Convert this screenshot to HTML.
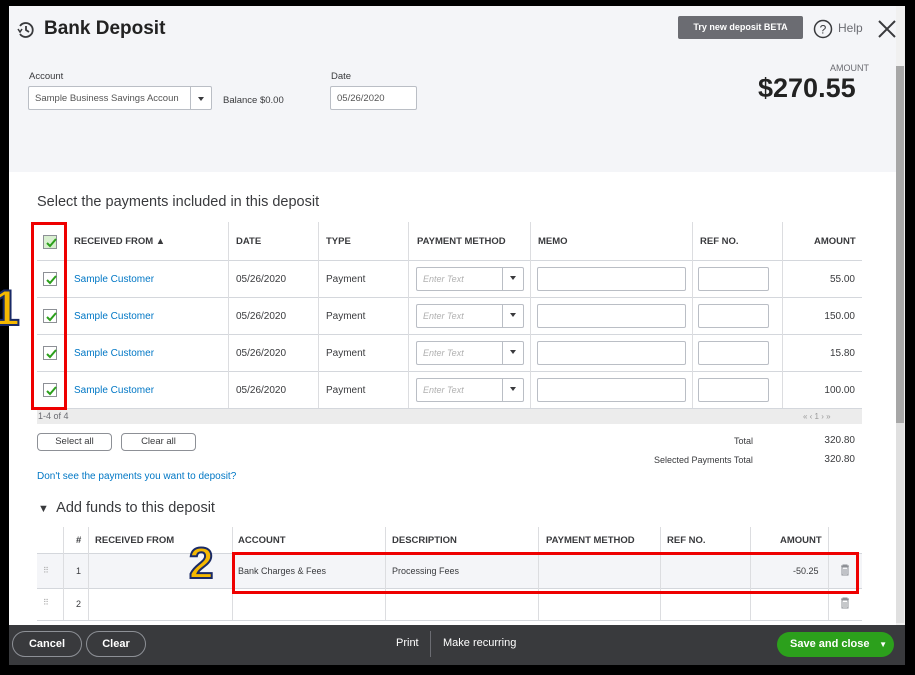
<!DOCTYPE html>
<html><head><meta charset="utf-8"><style>
*{box-sizing:border-box;margin:0;padding:0}
body{width:915px;height:675px;background:#000;position:relative;overflow:hidden;font-family:"Liberation Sans",sans-serif;color:#393a3d}
.a{position:absolute}
.hdr{left:9px;top:6px;width:887px;height:166px;background:#f4f5f8}
.main{left:9px;top:172px;width:887px;height:453px;background:#fff}
.foot{left:9px;top:625px;width:896px;height:40px;background:#393a3d}
.t{font-size:10px}
.th{font-size:9.5px;font-weight:bold;color:#393a3d}
.lnk{color:#0077c5;font-size:10px}
.vl{width:1px;background:#dcdde0}
.hl{height:1px;background:#d4d7dc}
.in{border:1px solid #babec5;background:#fff;border-radius:2px}
.cb{width:14px;height:14px;border:1px solid #8d9096;background:#fff}
.cb svg{position:absolute;left:1px;top:1px}
.btn{border:1px solid #8d9096;border-radius:4px;font-size:9.5px;text-align:center;line-height:16px;background:#fff}
.fb{border:1px solid #8d9096;border-radius:14px;color:#fff;font-size:11px;font-weight:bold;text-align:center;line-height:24px}
.red{border:3px solid #ee0000}
.num{font-weight:bold;color:#f5b800;-webkit-text-stroke:2px #1a2a66;font-family:"Liberation Sans",sans-serif;line-height:1}
.dd{position:absolute;left:93px;top:8px;width:0;height:0;border-left:3px solid transparent;border-right:3px solid transparent;border-top:4px solid #393a3d}
</style></head><body>
<div class="a hdr"></div>
<div class="a main"></div>
<div class="a foot"></div>
<div class="a" style="left:896px;top:6px;width:9px;height:619px;background:#f0f0f0"></div>
<div class="a" style="left:896px;top:66px;width:8px;height:357px;background:#a7a7a7"></div>
<div class="a" style="left:896px;top:423px;width:8px;height:200px;background:#e0e0e0"></div>

<svg class="a" style="left:16px;top:20px" width="20" height="20" viewBox="0 0 20 20"><path d="M4 6A7 7 0 1 1 4 14" fill="none" stroke="#393a3d" stroke-width="1.8"/><path d="M10 6v4l3 2" fill="none" stroke="#393a3d" stroke-width="1.8"/><path d="M2 9l2 3 2-3" fill="none" stroke="#393a3d" stroke-width="1.5"/></svg>
<div class="a" style="left:44px;top:18px;font-size:19px;font-weight:bold;color:#222">Bank Deposit</div>
<div class="a" style="left:678px;top:16px;width:125px;height:23px;background:#6b6c72;border-radius:2px;color:#fff;font-size:9px;font-weight:bold;text-align:center;line-height:23px">Try new deposit BETA</div>
<svg class="a" style="left:813px;top:19px" width="20" height="20"><circle cx="10" cy="10" r="8.5" fill="none" stroke="#393a3d" stroke-width="1.5"/><text x="10" y="14.5" text-anchor="middle" font-size="12" font-family="Liberation Sans" fill="#393a3d">?</text></svg>
<div class="a" style="left:838px;top:21px;font-size:12px;color:#6b6c72">Help</div>
<svg class="a" style="left:877px;top:19px" width="20" height="20"><path d="M2 2L18 18M18 2L2 18" stroke="#393a3d" stroke-width="2"/></svg>
<div class="a t" style="left:29px;top:71px;font-size:9.5px">Account</div>
<div class="a in" style="left:28px;top:86px;width:184px;height:24px"></div>
<div class="a t" style="left:35px;top:93px;font-size:9.5px;color:#555">Sample Business Savings Accoun</div>
<div class="a vl" style="left:190px;top:87px;height:22px;background:#babec5"></div>
<div class="a" style="left:198px;top:97px;border-left:3px solid transparent;border-right:3px solid transparent;border-top:4px solid #393a3d"></div>
<div class="a t" style="left:223px;top:95px;font-size:9.5px">Balance $0.00</div>
<div class="a t" style="left:331px;top:71px;font-size:9.5px">Date</div>
<div class="a in" style="left:330px;top:86px;width:87px;height:24px"></div>
<div class="a t" style="left:337px;top:93px;font-size:9.5px;color:#555">05/26/2020</div>
<div class="a" style="left:830px;top:63px;font-size:9px;color:#6b6c72">AMOUNT</div>
<div class="a" style="left:758px;top:73px;font-size:27px;font-weight:bold;color:#222">$270.55</div>

<div class="a" style="left:37px;top:194px;font-size:14.5px">Select the payments included in this deposit</div>
<div class="a hl" style="left:37px;top:260px;width:825px"></div>
<div class="a hl" style="left:37px;top:297px;width:825px"></div>
<div class="a hl" style="left:37px;top:334px;width:825px"></div>
<div class="a hl" style="left:37px;top:371px;width:825px"></div>
<div class="a hl" style="left:37px;top:408px;width:825px"></div>
<div class="a" style="left:37px;top:409px;width:825px;height:15px;background:#ececec"></div>
<div class="a" style="left:38px;top:411px;font-size:9px;color:#6b6c72">1-4 of 4</div>
<div class="a" style="left:803px;top:412px;font-size:8px;color:#999">« ‹ 1 › »</div>
<div class="a vl" style="left:65px;top:222px;height:186px"></div>
<div class="a vl" style="left:228px;top:222px;height:186px"></div>
<div class="a vl" style="left:318px;top:222px;height:186px"></div>
<div class="a vl" style="left:408px;top:222px;height:186px"></div>
<div class="a vl" style="left:530px;top:222px;height:186px"></div>
<div class="a vl" style="left:692px;top:222px;height:186px"></div>
<div class="a vl" style="left:782px;top:222px;height:186px"></div>
<div class="a th" style="left:74px;top:236px">RECEIVED FROM ▲</div>
<div class="a th" style="left:236px;top:236px">DATE</div>
<div class="a th" style="left:326px;top:236px">TYPE</div>
<div class="a th" style="left:417px;top:236px">PAYMENT METHOD</div>
<div class="a th" style="left:538px;top:236px">MEMO</div>
<div class="a th" style="left:700px;top:236px">REF NO.</div>
<div class="a th" style="left:814px;top:236px">AMOUNT</div>
<div class="a cb" style="left:43px;top:235px;background:#d8efd0"><svg width="12" height="12"><path d="M2 6l3 3 6-7" fill="none" stroke="#2ca01c" stroke-width="2"/></svg></div>

<div class="a cb" style="left:43px;top:272px"><svg width="12" height="12"><path d="M2 6l3 3 6-7" fill="none" stroke="#2ca01c" stroke-width="2"/></svg></div>
<div class="a cb" style="left:43px;top:309px"><svg width="12" height="12"><path d="M2 6l3 3 6-7" fill="none" stroke="#2ca01c" stroke-width="2"/></svg></div>
<div class="a cb" style="left:43px;top:346px"><svg width="12" height="12"><path d="M2 6l3 3 6-7" fill="none" stroke="#2ca01c" stroke-width="2"/></svg></div>
<div class="a cb" style="left:43px;top:383px"><svg width="12" height="12"><path d="M2 6l3 3 6-7" fill="none" stroke="#2ca01c" stroke-width="2"/></svg></div>

<div class="a lnk" style="left:74px;top:274px">Sample Customer</div>
<div class="a lnk" style="left:74px;top:311px">Sample Customer</div>
<div class="a lnk" style="left:74px;top:348px">Sample Customer</div>
<div class="a lnk" style="left:74px;top:385px">Sample Customer</div>
<div class="a t" style="left:236px;top:274px">05/26/2020</div>
<div class="a t" style="left:236px;top:311px">05/26/2020</div>
<div class="a t" style="left:236px;top:348px">05/26/2020</div>
<div class="a t" style="left:236px;top:385px">05/26/2020</div>
<div class="a t" style="left:326px;top:274px">Payment</div>
<div class="a t" style="left:326px;top:311px">Payment</div>
<div class="a t" style="left:326px;top:348px">Payment</div>
<div class="a t" style="left:326px;top:385px">Payment</div>

<div class="a in" style="left:416px;top:267px;width:108px;height:24px"><span style="position:absolute;left:6px;top:6px;font-size:9px;font-style:italic;color:#b0b0b0">Enter Text</span><span style="position:absolute;left:85px;top:0;width:1px;height:22px;background:#babec5"></span><span class="dd"></span></div>
<div class="a in" style="left:416px;top:304px;width:108px;height:24px"><span style="position:absolute;left:6px;top:6px;font-size:9px;font-style:italic;color:#b0b0b0">Enter Text</span><span style="position:absolute;left:85px;top:0;width:1px;height:22px;background:#babec5"></span><span class="dd"></span></div>
<div class="a in" style="left:416px;top:341px;width:108px;height:24px"><span style="position:absolute;left:6px;top:6px;font-size:9px;font-style:italic;color:#b0b0b0">Enter Text</span><span style="position:absolute;left:85px;top:0;width:1px;height:22px;background:#babec5"></span><span class="dd"></span></div>
<div class="a in" style="left:416px;top:378px;width:108px;height:24px"><span style="position:absolute;left:6px;top:6px;font-size:9px;font-style:italic;color:#b0b0b0">Enter Text</span><span style="position:absolute;left:85px;top:0;width:1px;height:22px;background:#babec5"></span><span class="dd"></span></div>

<div class="a in" style="left:537px;top:267px;width:149px;height:24px"></div>
<div class="a in" style="left:537px;top:304px;width:149px;height:24px"></div>
<div class="a in" style="left:537px;top:341px;width:149px;height:24px"></div>
<div class="a in" style="left:537px;top:378px;width:149px;height:24px"></div>
<div class="a in" style="left:698px;top:267px;width:71px;height:24px"></div>
<div class="a in" style="left:698px;top:304px;width:71px;height:24px"></div>
<div class="a in" style="left:698px;top:341px;width:71px;height:24px"></div>
<div class="a in" style="left:698px;top:378px;width:71px;height:24px"></div>
<div class="a t" style="right:60px;top:274px">55.00</div>
<div class="a t" style="right:60px;top:311px">150.00</div>
<div class="a t" style="right:60px;top:348px">15.80</div>
<div class="a t" style="right:60px;top:385px">100.00</div>

<div class="a btn" style="left:37px;top:433px;width:75px;height:18px">Select all</div>
<div class="a btn" style="left:121px;top:433px;width:75px;height:18px">Clear all</div>
<div class="a" style="left:734px;top:436px;font-size:9px">Total</div>
<div class="a t" style="right:60px;top:435px">320.80</div>
<div class="a" style="left:654px;top:455px;font-size:9px">Selected Payments Total</div>
<div class="a t" style="right:60px;top:454px">320.80</div>
<div class="a lnk" style="left:37px;top:471px">Don't see the payments you want to deposit?</div>

<div class="a" style="left:38px;top:500px;font-size:14.5px"><span style="font-size:11px">▼</span>&nbsp; Add funds to this deposit</div>
<div class="a" style="left:37px;top:553px;width:825px;height:35px;background:#f4f5f8"></div>
<div class="a hl" style="left:37px;top:553px;width:825px"></div>
<div class="a hl" style="left:37px;top:588px;width:825px"></div>
<div class="a hl" style="left:37px;top:620px;width:825px"></div>
<div class="a vl" style="left:63px;top:527px;height:93px"></div>
<div class="a vl" style="left:88px;top:527px;height:93px"></div>
<div class="a vl" style="left:232px;top:527px;height:93px"></div>
<div class="a vl" style="left:385px;top:527px;height:93px"></div>
<div class="a vl" style="left:538px;top:527px;height:93px"></div>
<div class="a vl" style="left:660px;top:527px;height:93px"></div>
<div class="a vl" style="left:750px;top:527px;height:93px"></div>
<div class="a vl" style="left:828px;top:527px;height:93px"></div>
<div class="a th" style="left:76px;top:535px">#</div>
<div class="a th" style="left:95px;top:535px">RECEIVED FROM</div>
<div class="a th" style="left:238px;top:535px">ACCOUNT</div>
<div class="a th" style="left:392px;top:535px">DESCRIPTION</div>
<div class="a th" style="left:546px;top:535px">PAYMENT METHOD</div>
<div class="a th" style="left:667px;top:535px">REF NO.</div>
<div class="a th" style="left:780px;top:535px">AMOUNT</div>
<div class="a" style="left:43px;top:566px;font-size:8px;color:#aaa">⠿</div>
<div class="a" style="left:43px;top:598px;font-size:8px;color:#aaa">⠿</div>
<div class="a t" style="left:76px;top:566px;font-size:9px">1</div>
<div class="a t" style="left:76px;top:599px;font-size:9px">2</div>
<div class="a t" style="left:238px;top:566px;font-size:9px">Bank Charges &amp; Fees</div>
<div class="a t" style="left:392px;top:566px;font-size:9px">Processing Fees</div>
<div class="a t" style="left:793px;top:566px;font-size:9px">-50.25</div>
<svg class="a" style="left:840px;top:564px" width="10" height="12"><path d="M1 2h8M3 2V1h4v1M2 3h6v8H2zM4 5v5M6 5v5" fill="none" stroke="#8d9096" stroke-width="1"/></svg>
<svg class="a" style="left:840px;top:597px" width="10" height="12"><path d="M1 2h8M3 2V1h4v1M2 3h6v8H2zM4 5v5M6 5v5" fill="none" stroke="#8d9096" stroke-width="1"/></svg>

<div class="a red" style="left:31px;top:222px;width:36px;height:188px"></div>
<div class="a red" style="left:232px;top:552px;width:627px;height:42px"></div>
<div class="a num" style="left:-8px;top:283px;font-size:50px">1</div>
<div class="a num" style="left:189px;top:542px;font-size:44px">2</div>

<div class="a fb" style="left:12px;top:631px;width:70px;height:26px">Cancel</div>
<div class="a fb" style="left:86px;top:631px;width:60px;height:26px">Clear</div>
<div class="a" style="left:396px;top:637px;color:#fff;font-size:11px">Print</div>
<div class="a" style="left:430px;top:631px;width:1px;height:26px;background:#6b6c72"></div>
<div class="a" style="left:443px;top:637px;color:#fff;font-size:11px">Make recurring</div>
<div class="a" style="left:777px;top:632px;width:117px;height:25px;background:#2ca01c;border-radius:13px;color:#fff;font-size:11px;font-weight:bold;line-height:25px;padding-left:13px">Save and close <span style="position:absolute;right:7px;font-size:8px">▼</span></div>
</body></html>
